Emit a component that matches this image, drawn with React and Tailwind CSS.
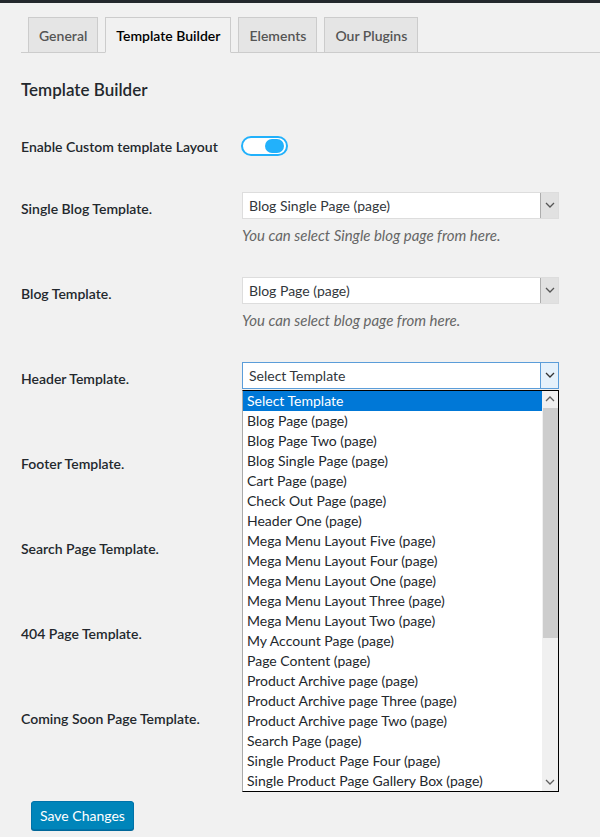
import React from "react";

const font = { fontFamily: "Lato, 'Noto Sans', sans-serif" };

const tabs = ["General", "Template Builder", "Elements", "Our Plugins"];

const options = [
  "Select Template",
  "Blog Page (page)",
  "Blog Page Two (page)",
  "Blog Single Page (page)",
  "Cart Page (page)",
  "Check Out Page (page)",
  "Header One (page)",
  "Mega Menu Layout Five (page)",
  "Mega Menu Layout Four (page)",
  "Mega Menu Layout One (page)",
  "Mega Menu Layout Three (page)",
  "Mega Menu Layout Two (page)",
  "My Account Page (page)",
  "Page Content (page)",
  "Product Archive page (page)",
  "Product Archive page Three (page)",
  "Product Archive page Two (page)",
  "Search Page (page)",
  "Single Product Page Four (page)",
  "Single Product Page Gallery Box (page)",
];

function Chevron({ up = false, className = "" }) {
  return (
    <svg width="10" height="6" viewBox="0 0 10 6" className={className}>
      <path
        d={up ? "M1 5 L5 1 L9 5" : "M1 1 L5 5 L9 1"}
        fill="none"
        stroke="currentColor"
        strokeWidth="1.3"
      />
    </svg>
  );
}

function Select({ value, focused = false }) {
  return (
    <div
      className={`flex h-[27px] w-[317px] bg-white border ${
        focused ? "border-[#5b9dd9]" : "border-[#dddddd]"
      }`}
    >
      <div className="flex-1 flex items-center pl-[6px] text-[14px] text-[#32373c]">{value}</div>
      <div
        className={`w-[18px] flex items-center justify-center border-l ${
          focused ? "bg-[#e5f1fb] border-[#5b9dd9] text-[#333]" : "bg-[#e1e1e1] border-[#adadad] text-[#555]"
        }`}
      >
        <Chevron />
      </div>
    </div>
  );
}

function Row({ label, children, className = "h-[85px]" }) {
  return (
    <div className={`flex ${className}`}>
      <div className="w-[221px] pt-[21px] text-[14px] font-semibold text-[#23282d]">{label}</div>
      <div className="pt-[15px] relative">{children}</div>
    </div>
  );
}

function Desc({ children }) {
  return <p className="mt-[5px] text-[15px] italic text-[#666]">{children}</p>;
}

function Dropdown() {
  return (
    <div className="absolute left-0 top-[43px] w-[317px] h-[402px] bg-white border border-black border-l-[#aaaaaa] flex z-10">
      <div className="flex-1 flex flex-col">
        {options.map((o, i) => (
          <div
            key={o}
            className={`h-[20px] flex items-center pl-[4px] text-[14px] ${
              i === 0 ? "bg-[#0078d7] text-white" : "text-[#23282d]"
            }`}
          >
            {o}
          </div>
        ))}
      </div>
      <div className="w-[16px] bg-[#f0f0f0] flex flex-col items-center">
        <div className="h-[17px] flex items-center justify-center text-[#606060]">
          <Chevron up />
        </div>
        <div className="w-[15px] h-[230px] bg-[#cdcdcd]" />
        <div className="flex-1" />
        <div className="h-[17px] flex items-center justify-center text-[#606060]">
          <Chevron />
        </div>
      </div>
    </div>
  );
}

export default function App() {
  return (
    <div className="min-h-[837px] bg-[#f1f1f1] text-[#23282d]" style={font}>
      <div className="h-[3px] bg-[#23282d]" />
      <div className="pl-[21px] pt-[14px]">
        <div className="flex items-end gap-[7px] border-b border-[#cccccc] pl-[7px]">
          {tabs.map((t) => {
            const active = t === "Template Builder";
            return (
              <div
                key={t}
                className={`h-[36px] -mb-px px-[10px] flex items-center border text-[14px] font-semibold ${
                  active
                    ? "bg-[#f1f1f1] border-[#cccccc] border-b-[#f1f1f1] text-[#000]"
                    : "bg-[#e5e5e5] border-[#cccccc] text-[#555]"
                }`}
              >
                {t}
              </div>
            );
          })}
        </div>
      </div>

      <div className="pl-[21px]">
        <h2 className="mt-[24px] text-[17px] font-semibold text-[#23282d]">Template Builder</h2>

        <div className="mt-[16px] flex h-[58px]">
          <div className="w-[220px] pt-[17px] text-[14px] font-semibold">Enable Custom template Layout</div>
          <div className="pt-[17px]">
            <div className="w-[47px] h-[20px] rounded-full border-2 border-[#22b1fb] bg-white flex items-center justify-end pr-[2px]">
              <div className="w-[19px] h-[14px] rounded-full bg-[#22b1fb]" />
            </div>
          </div>
        </div>

        <Row label="Single Blog Template.">
          <Select value="Blog Single Page (page)" />
          <Desc>You can select Single blog page from here.</Desc>
        </Row>
        <Row label="Blog Template.">
          <Select value="Blog Page (page)" />
          <Desc>You can select blog page from here.</Desc>
        </Row>
        <Row label="Header Template.">
          <Select value="Select Template" focused />
          <Dropdown />
        </Row>
        <Row label="Footer Template." />
        <Row label="Search Page Template." />
        <Row label="404 Page Template." />
        <Row label="Coming Soon Page Template." className="h-[114px]" />

        <div className="pl-[10px]">
          <button className="h-[29px] px-[8px] bg-[#0085ba] border border-[#0073aa] rounded-[3px] shadow-[0_1px_0_#006799] text-white text-[14px]">
            Save Changes
          </button>
        </div>
      </div>
    </div>
  );
}
